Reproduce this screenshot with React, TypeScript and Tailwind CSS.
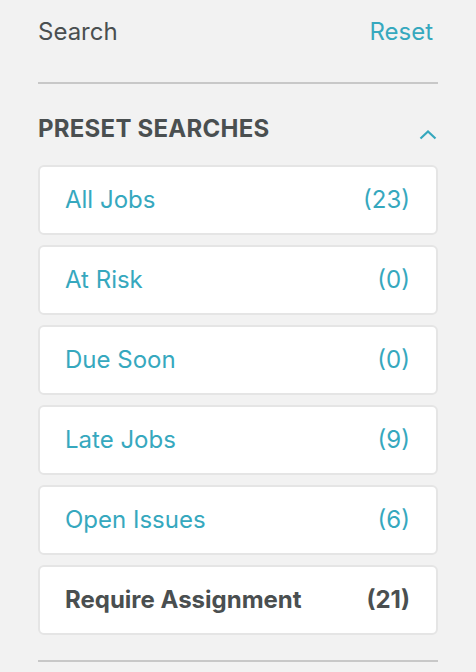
type Preset = {
  label: string;
  count: number;
  active?: boolean;
};

const presets: Preset[] = [
  { label: "All Jobs", count: 23 },
  { label: "At Risk", count: 0 },
  { label: "Due Soon", count: 0 },
  { label: "Late Jobs", count: 9 },
  { label: "Open Issues", count: 6 },
  { label: "Require Assignment", count: 21, active: true },
];

const PresetCard = ({ label, count, active }: Preset) => (
  <button
    className={`flex h-[70px] w-full items-center justify-between rounded-md border-2 border-[#e5e5e5] bg-white pl-[25px] pr-[26px] text-[24px] ${
      active ? "font-bold text-[#4a4f50]" : "text-[#36a8be]"
    }`}
  >
    <span>{label}</span>
    <span>({count})</span>
  </button>
);

export default function App() {
  return (
    <div
      className="min-h-[672px] w-[476px] bg-[#f2f2f2] px-[38px]"
      style={{ fontFamily: "Inter, 'Noto Sans', sans-serif" }}
    >
      <div className="flex h-[64px] items-center justify-between pr-[5px]">
        <span className="text-[24px] text-[#4a4f50]">Search</span>
        <button className="text-[24px] text-[#36a8be]">Reset</button>
      </div>

      <div className="mt-[18px] h-[2px] bg-[#c8c8c8]" />

      <div className="mt-[27px] flex h-[36px] items-center justify-between">
        <h2 className="text-[24px] font-bold uppercase tracking-[0.01em] text-[#4a4f50]">
          Preset Searches
        </h2>
        <svg
          width="18"
          height="10"
          viewBox="0 0 18 10"
          className="mr-[1px] mt-[12px]"
          fill="none"
        >
          <polyline
            points="1.5,8.5 9,1.5 16.5,8.5"
            stroke="#36a8be"
            strokeWidth="2.2"
          />
        </svg>
      </div>

      <div className="mt-[18px] flex flex-col gap-[10px]">
        {presets.map((p) => (
          <PresetCard key={p.label} {...p} />
        ))}
      </div>

      <div className="mt-[25px] h-[2px] bg-[#c8c8c8]" />
    </div>
  );
}
